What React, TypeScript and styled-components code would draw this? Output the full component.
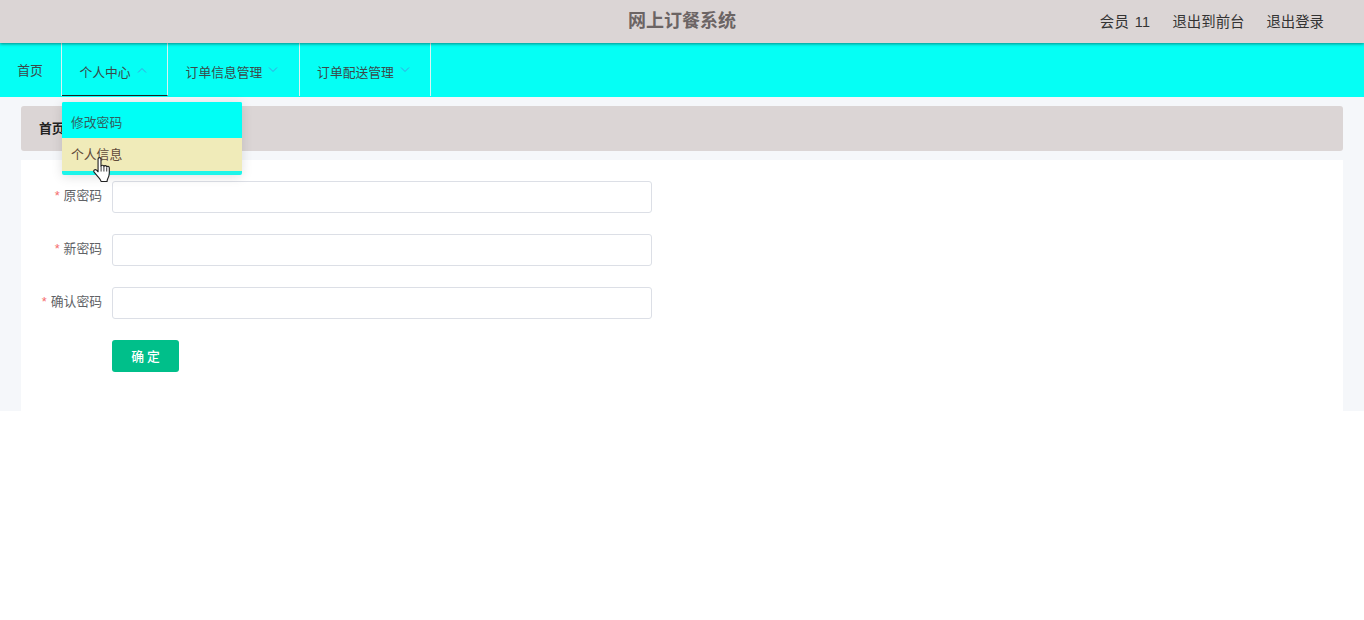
import styled, { createGlobalStyle } from 'styled-components';

const GlobalStyle = createGlobalStyle`
  html, body {
    margin: 0;
    padding: 0;
    background: #fff;
    font-family: "Liberation Sans", "Noto Sans CJK SC", sans-serif;
  }
`;

const Page = styled.div`
  width: 1364px;
  height: 620px;
  position: relative;
  overflow: hidden;
`;

const Header = styled.header`
  height: 43px;
  background: #dbd5d5;
  display: flex;
  align-items: center;
  justify-content: center;
  position: relative;
  box-shadow: 0 1px 3px rgba(0, 0, 0, 0.45);
  z-index: 2;
`;

const SiteTitle = styled.h1`
  margin: 0;
  font-size: 18px;
  font-weight: 700;
  color: #6b6464;
  line-height: 43px;
`;

const UserLinks = styled.div`
  position: absolute;
  right: 40px;
  top: 0;
  height: 41px;
  display: flex;
  align-items: center;
  gap: 22px;
  font-size: 14.4px;
  color: #333;
`;

const MemberName = styled.span`
  word-spacing: 1px;
  letter-spacing: 0.4px;
`;

const NavBar = styled.nav`
  height: 54px;
  background: #05fff5;
  display: flex;
`;

const NavItem = styled.div<{ $active?: boolean; $wide: number }>`
  position: relative;
  width: ${(p) => p.$wide}px;
  box-sizing: border-box;
  height: 53px;
  display: flex;
  align-items: center;
  justify-content: center;
  gap: 6px;
  font-size: 12.8px;
  color: #3a4a4a;
  padding-top: 4px;
  padding-right: 3px;
  border-right: 1px solid #d9f3f2;
  border-bottom: ${(p) => (p.$active ? '1px solid #222' : 'none')};
`;

const HomeItem = styled.div`
  width: 62px;
  box-sizing: border-box;
  height: 53px;
  font-size: 12.8px;
  color: #3a4a4a;
  padding-bottom: 1px;
  display: flex;
  align-items: center;
  justify-content: center;
  padding-right: 1px;
  border-right: 1px solid #d9f3f2;
`;

const Arrow = styled.svg`
  width: 10px;
  height: 6px;
  margin-top: -3px;
  fill: none;
  stroke: #3f9fe0;
  stroke-width: 1;
`;

const Dropdown = styled.div`
  position: absolute;
  left: 62px;
  top: 102px;
  width: 180px;
  height: 73px;
  background: #1df5ea;
  border-radius: 2px;
  overflow: hidden;
  box-shadow: 0 2px 12px rgba(0, 0, 0, 0.12);
  z-index: 5;
`;

const DropdownItem = styled.div<{ $hover?: boolean }>`
  height: ${(p) => (p.$hover ? 33 : 36)}px;
  background: ${(p) => (p.$hover ? '#f0ebb9' : '#00fff6')};
  color: ${(p) => (p.$hover ? '#5f4a3a' : '#2f5f60')};
  font-size: 12.8px;
  padding-left: 9px;
  display: flex;
  align-items: center;
  padding-top: ${(p) => (p.$hover ? 0 : 4)}px;
  padding-bottom: ${(p) => (p.$hover ? 2 : 2)}px;
  box-sizing: border-box;
`;

const Main = styled.main`
  height: 314px;
  background: #f5f7fa;
  padding: 9px 21px 0;
  box-sizing: border-box;
`;

const Breadcrumb = styled.div`
  height: 45px;
  background: #dbd5d5;
  border-radius: 3px;
  display: flex;
  align-items: center;
  padding: 0 0 2px 18px;
  box-sizing: border-box;
  font-size: 12.8px;
  font-weight: 700;
  color: #222;
`;

const FormCard = styled.form`
  margin-top: 9px;
  height: 251px;
  background: #fff;
  padding-top: 21px;
  box-sizing: border-box;
  display: flex;
  flex-direction: column;
  gap: 21px;
`;

const Row = styled.div`
  display: flex;
  align-items: center;
  height: 32px;
`;

const Label = styled.label`
  width: 91px;
  padding: 0 10px 6px 0;
  box-sizing: border-box;
  text-align: right;
  font-size: 12.8px;
  color: #606266;
`;

const Star = styled.span`
  color: #f56c6c;
  margin-right: 4px;
`;

const TextInput = styled.input`
  width: 540px;
  height: 32px;
  box-sizing: border-box;
  background: #fff;
  border: 1px solid #dcdfe6;
  border-radius: 3px;
  outline: none;
`;

const SubmitButton = styled.button`
  width: 67px;
  height: 32px;
  margin-left: 91px;
  background: #00bf8a;
  border: 0;
  border-radius: 3px;
  color: #fff;
  font-size: 12.8px;
  font-weight: 500;
  font-family: inherit;
  letter-spacing: 3px;
  padding: 0 0 2px 3px;
`;

const Cursor = styled.svg`
  position: absolute;
  left: 93px;
  top: 157px;
  width: 18px;
  height: 25px;
  z-index: 6;
`;

const navItems = [
  { label: '个人中心', wide: 106, up: true },
  { label: '订单信息管理', wide: 132, up: false },
  { label: '订单配送管理', wide: 131, up: false },
];

const fields = ['原密码', '新密码', '确认密码'];

const App = () => {
  return (
    <Page>
      <GlobalStyle />
      <Header>
        <SiteTitle>网上订餐系统</SiteTitle>
        <UserLinks>
          <MemberName>会员 11</MemberName>
          <span>退出到前台</span>
          <span>退出登录</span>
        </UserLinks>
      </Header>
      <NavBar>
        <HomeItem>首页</HomeItem>
        {navItems.map((item) => (
          <NavItem key={item.label} $wide={item.wide} $active={item.up}>
            {item.label}
            <Arrow viewBox="0 0 10 6">
              <path d={item.up ? 'M1 5.5 5 1.5 9 5.5' : 'M1 .5 5 4.5 9 .5'} />
            </Arrow>
          </NavItem>
        ))}
      </NavBar>
      <Dropdown>
        <DropdownItem>修改密码</DropdownItem>
        <DropdownItem $hover>个人信息</DropdownItem>
      </Dropdown>
      <Main>
        <Breadcrumb>首页</Breadcrumb>
        <FormCard>
          {fields.map((name) => (
            <Row key={name}>
              <Label>
                <Star>*</Star>
                {name}
              </Label>
              <TextInput type="password" />
            </Row>
          ))}
          <Row>
            <SubmitButton type="button">确定</SubmitButton>
          </Row>
        </FormCard>
      </Main>
      <Cursor viewBox="1 1 16 22">
        <path
          d="M5.5 2.6c0-1.6 2.6-1.6 2.6 0v6.6c.3-1.4 2.5-1.3 2.6.2.3-1.2 2.4-1.1 2.5.4.4-1 2.3-.8 2.3.7v4.6c0 2.4-.6 3.6-1.4 5.2-.4.9-.6 1.6-.6 2.4H8.3c-.6-2-2-3.2-3.7-5.3L2 14.3c-1-1.5.8-3 2.2-1.7l1.3 1.4Z"
          fill="#fff"
          stroke="#222"
          strokeWidth="1"
          strokeLinejoin="round"
        />
        <path d="M8.2 9.4v4.4M10.7 9.6v4.2M13.2 10.4v3.4" stroke="#222" strokeWidth="0.8" fill="none" />
      </Cursor>
    </Page>
  );
};

export default App;
